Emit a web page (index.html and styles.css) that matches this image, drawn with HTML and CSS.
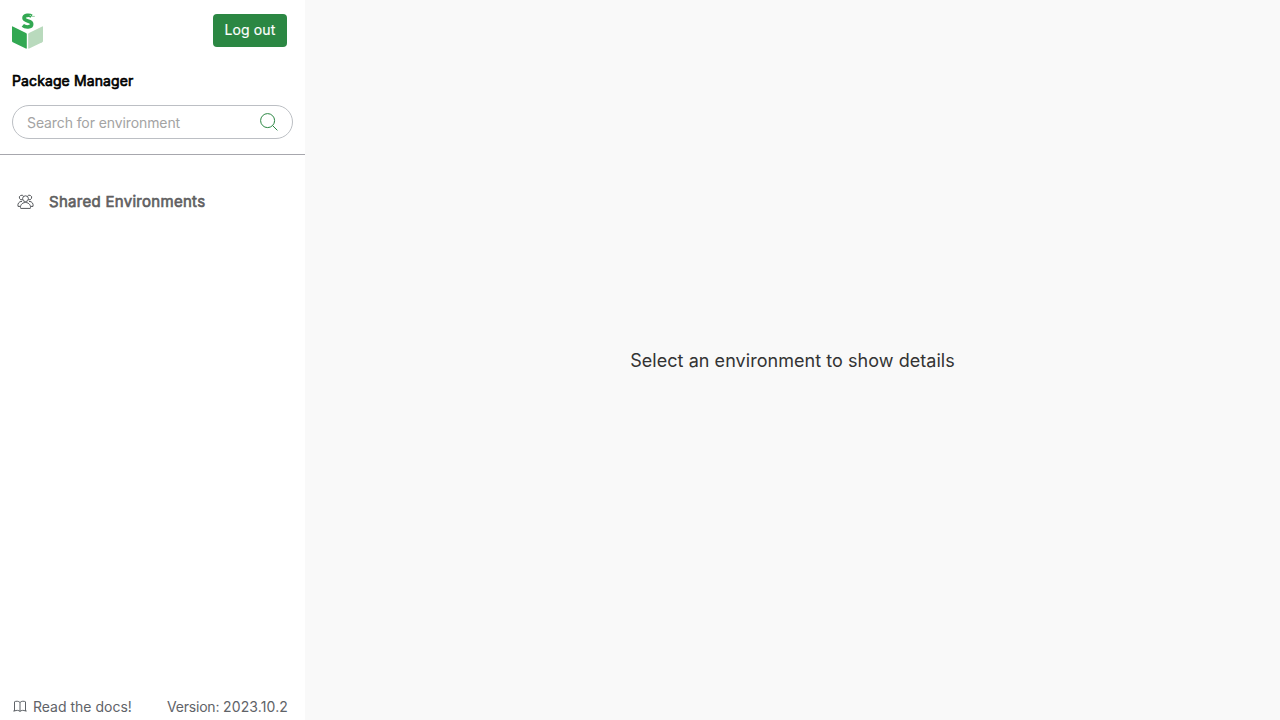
FILE: index.html
```
<!DOCTYPE html>
<html lang="en">
<head>
<meta charset="utf-8">
<title>Package Manager</title>
<link rel="stylesheet" href="styles.css">
</head>
<body>
<div class="app">
  <aside class="sidebar">
    <header class="top">
      <svg class="logo" width="31" height="36" viewBox="0 0 31 36">
        <path class="book-left" d="M0 14Q0 13 .8 13.4L14 20Q14.8 20.4 14.8 21.3V35Q14.8 36 13.8 35.6L.8 29.2Q0 28.8 0 28Z"/>
        <path class="book-right" d="M31 14Q31 13 30.2 13.4L17 20Q16.2 20.4 16.2 21.3V35Q16.2 36 17.2 35.6L30.2 29.2Q31 28.8 31 28Z"/>
        <path class="snake" d="M19.6 3.2C17.8 1.9 12 1.6 12 5.1C12 8.8 19.7 7.2 19.7 10.9C19.7 14.8 13.3 14.5 10.8 12.4"/>
        <path class="tongue" d="M19.5 3.4H22.8"/>
        <circle class="eye" cx="18.2" cy="2.4" r=".5"/>
      </svg>
      <button class="logout">Log out</button>
    </header>
    <h1 class="title">Package Manager</h1>
    <div class="search">
      <input class="search-input" type="text" placeholder="Search for environment">
      <svg class="search-icon" width="20" height="20" viewBox="0 0 20 20">
        <circle cx="8.6" cy="8.6" r="7"/><path d="M13.6 13.6L18.4 18.4"/>
      </svg>
    </div>
    <nav class="groups">
      <svg class="people" width="17" height="16" viewBox="0 0 17 16">
        <circle cx="8.5" cy="4.7" r="2.9"/>
        <path d="M3.7 14.4C2.8 12.4 4.4 8.5 8.5 8.5S14.2 12.4 13.3 14.4Z"/>
        <path d="M6.6 2.3A2.3 2.3 0 1 0 5.6 5.6M10.4 2.3A2.3 2.3 0 1 1 11.4 5.6M3.3 12.4H1C.4 10 1.8 7.2 5 7.4M13.7 12.4H16C16.6 10 15.2 7.2 12 7.4"/>
      </svg>
      <span class="group-name">Shared Environments</span>
    </nav>
    <footer class="footer">
      <a class="docs">
        <svg class="book" width="14" height="13" viewBox="0 0 14 13">
          <path d="M7 2.5C5.8 1 2.8.9 1.5 1.8V11H.3M1.5 11C3.5 10 5.8 10.2 7 11.4C8.2 10.2 10.5 10 12.5 11V1.8C11.2.9 8.2 1 7 2.5V11.4M12.5 11H13.7"/>
        </svg>
        <span>Read the docs!</span>
      </a>
      <span class="version">Version: <span class="number">2023.10.2</span></span>
    </footer>
  </aside>
  <main class="details">Select an environment to show details</main>
</div>
</body>
</html>
```
FILE: styles.css
```
* { box-sizing: border-box; }
body { margin: 0; font-family: Inter, sans-serif; background: #f9f9f9; }
.app { display: flex; height: 100vh; overflow: hidden; }
.sidebar { width: 305px; flex: none; display: flex; flex-direction: column; background: #fff; }
.top { display: flex; justify-content: space-between; align-items: flex-start; height: 50px; padding: 13px 18px 0 12px; }
.book-left { fill: #32a852; }
.book-right { fill: #b9dabd; }
.snake { fill: none; stroke: #32a852; stroke-width: 3.6; }
.tongue { fill: none; stroke: #7fc48f; stroke-width: .8; }
.eye { fill: #fff; }
.logout { width: 74px; height: 33px; margin-top: 1px; padding: 0 0 2px; border: 0; border-radius: 4px; background: #2b8743; color: #fff; font: 400 14px/31px Inter, sans-serif; letter-spacing: .1px; -webkit-text-stroke: .15px #fff; }
.title { margin: 21px 12px 0; font-size: 14px; line-height: 20px; font-weight: 400; color: #000; letter-spacing: .11px; -webkit-text-stroke: .65px #000; }
.search { display: flex; align-items: center; width: 281px; height: 34px; margin: 14px 12px 15px; padding: 0 13px 0 14px; border: 1px solid #bcbfc4; border-radius: 17px; }
.search-input { flex: 1; min-width: 0; padding: 0; border: 0; outline: 0; background: none; font: 14px Inter, sans-serif; letter-spacing: -.1px; }
.search-input::placeholder { color: #a3a3a3; }
.search-icon { fill: none; stroke: #2b8743; stroke-width: 1; }
.groups { display: flex; align-items: center; gap: 15px; flex: 1; align-self: stretch; max-height: 95px; padding: 0 17px; border-top: 1px solid #a7a7ad; }
.people { fill: none; stroke: #54575b; stroke-width: 1; }
.group-name { padding-bottom: 2px; font-size: 15px; letter-spacing: .29px; color: #5f6061; -webkit-text-stroke: .65px #5f6061; }
.footer { display: flex; justify-content: space-between; align-items: center; height: 26px; margin-top: auto; padding: 0 17px 1px 13px; font-size: 14px; line-height: 17px; color: #5f6368; }
.docs { display: flex; align-items: center; gap: 6px; }
.version { letter-spacing: -.2px; }
.number { letter-spacing: .13px; }
.book { fill: none; stroke: #5f6368; stroke-width: 1; }
.details { flex: 1; display: flex; align-items: center; justify-content: center; font-size: 18px; letter-spacing: .05px; color: #333; }
```
